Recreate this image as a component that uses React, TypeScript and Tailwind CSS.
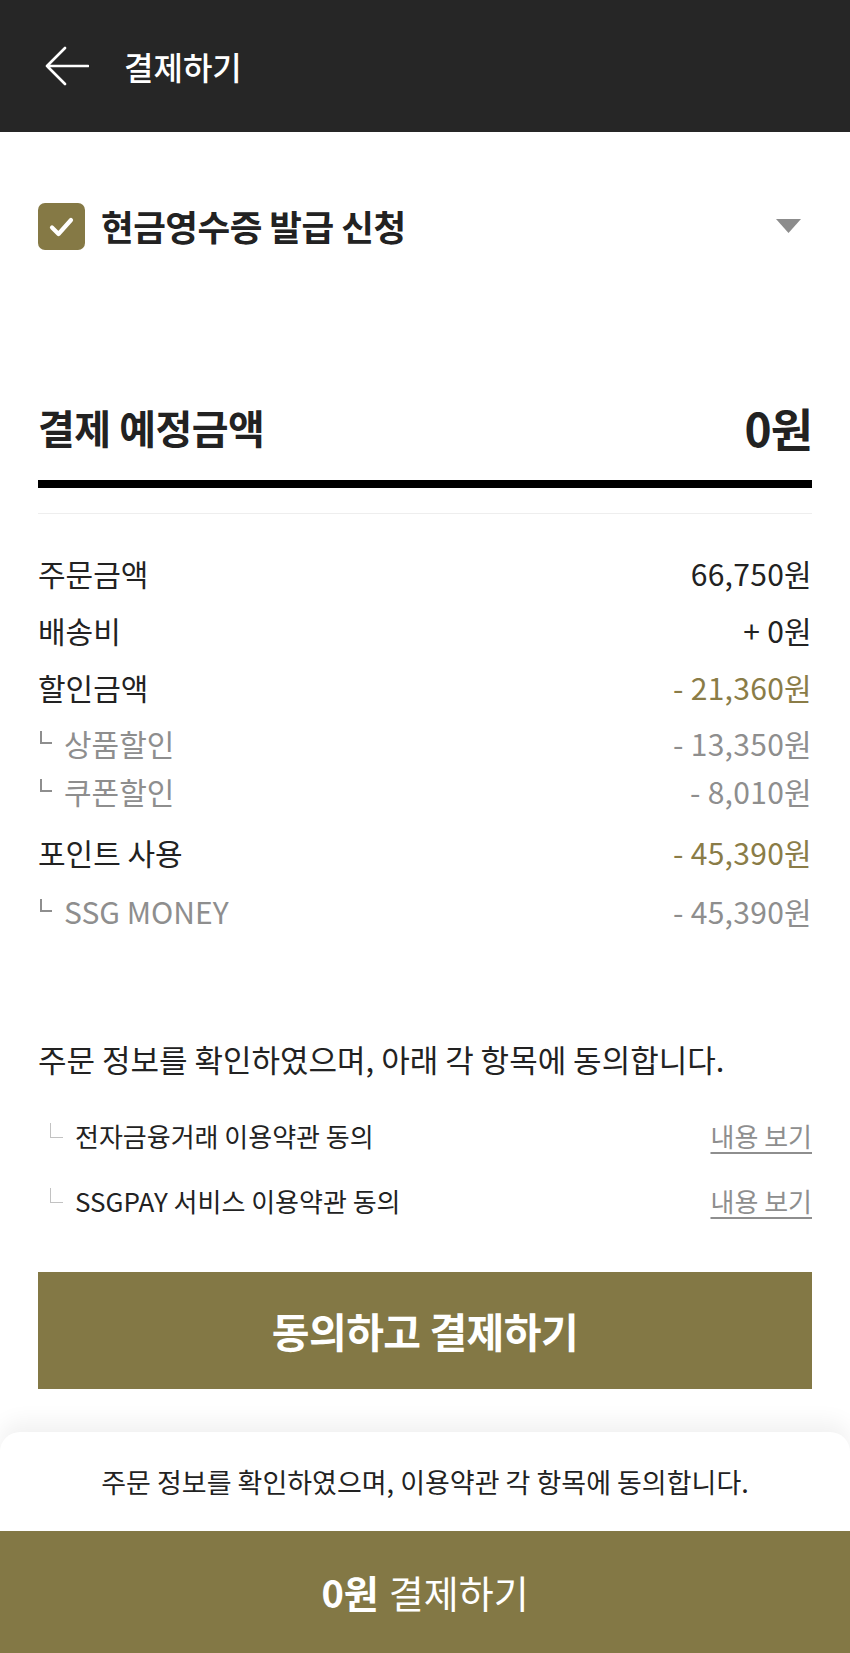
import React from "react";

const font = { fontFamily: '"Noto Sans CJK KR", "Noto Sans", sans-serif' };

function SubMark() {
  return <span className="inline-block w-[12px] h-[13px] border-l-[2px] border-b-[2px] border-[#8e8e8e] mb-[12px] mr-[12px] ml-[2px]" />;
}

function AgreeMark() {
  return <span className="inline-block w-[13px] h-[15px] border-l-[1.5px] border-b-[1.5px] border-[#c2c2c2] mb-[12px] mr-[12px] ml-[12px]" />;
}

type Row = { label: string; value: string; kind: "main" | "olive" | "sub"; mt: string };

const rows: Row[] = [
  { label: "주문금액", value: "66,750원", kind: "main", mt: "mt-[39px]" },
  { label: "배송비", value: "+ 0원", kind: "main", mt: "mt-[17px]" },
  { label: "할인금액", value: "- 21,360원", kind: "olive", mt: "mt-[17px]" },
  { label: "상품할인", value: "- 13,350원", kind: "sub", mt: "mt-[16px]" },
  { label: "쿠폰할인", value: "- 8,010원", kind: "sub", mt: "mt-[8px]" },
  { label: "포인트 사용", value: "- 45,390원", kind: "olive", mt: "mt-[21px]" },
  { label: "SSG MONEY", value: "- 45,390원", kind: "sub", mt: "mt-[19px]" },
];

export default function App() {
  return (
    <div className="w-[850px] h-[1653px] bg-white flex flex-col overflow-hidden" style={font}>
      <header className="h-[132px] shrink-0 bg-[#262626] flex items-center pl-[44px]">
        <svg width="45" height="40" viewBox="0 0 45 40" fill="none">
          <path d="M44 20H3M21 2L3 20L21 38" stroke="white" strokeWidth="2.6" strokeLinecap="round" strokeLinejoin="round" />
        </svg>
        <span className="ml-[35px] text-[32px] text-white font-medium leading-none">결제하기</span>
      </header>

      <main className="flex-1 px-[38px] flex flex-col">
        <div className="mt-[70px] h-[48px] flex items-center justify-between">
          <div className="flex items-center">
            <span className="w-[47px] h-[47px] rounded-[7px] bg-[#857945] flex items-center justify-center">
              <svg width="47" height="47" viewBox="0 0 47 47" fill="none">
                <path d="M14 24.5L20.5 31L33 17" stroke="white" strokeWidth="4.2" strokeLinecap="round" strokeLinejoin="round" />
              </svg>
            </span>
            <span className="ml-[16px] text-[35.5px] font-bold text-[#222] leading-none tracking-[-0.5px]">현금영수증 발급 신청</span>
          </div>
          <svg width="25" height="14" viewBox="0 0 25 14" className="mr-[11px]">
            <path d="M0 0H25L12.5 14Z" fill="#8c8c8c" />
          </svg>
        </div>

        <div className="mt-[147px] h-[60px] flex items-center justify-between">
          <span className="text-[40px] font-bold text-[#222] leading-none tracking-[-0.5px]">결제 예정금액</span>
          <span className="text-[46px] font-bold text-[#222] leading-none tracking-[-1px]">0원</span>
        </div>
        <div className="mt-[23px] h-[8px] bg-black" />
        <div className="mt-[25px] h-px bg-[#eeeeee]" />

        {rows.map((r, i) => (
          <div key={i} className={`${r.mt} h-[40px] flex items-center justify-between`}>
            <span className={`flex items-center text-[30px] leading-none ${r.kind === "sub" ? "text-[#8e8e8e]" : "text-[#222]"}`}>
              {r.kind === "sub" && <SubMark />}
              {r.label}
            </span>
            <span
              className={`text-[30px] leading-none tracking-[0.3px] ${
                r.kind === "olive" ? "text-[#8a7c47]" : r.kind === "sub" ? "text-[#8e8e8e]" : "text-[#222]"
              }`}
            >
              {r.value}
            </span>
          </div>
        ))}

        <div className="mt-[107px] h-[40px] flex items-center text-[31px] text-[#222] leading-none">
          주문 정보를 확인하였으며, 아래 각 항목에 동의합니다.
        </div>
        <div className="mt-[40px] h-[36px] flex items-center justify-between">
          <span className="flex items-center text-[26px] text-[#222] leading-none">
            <AgreeMark />
            전자금융거래 이용약관 동의
          </span>
          <span className="text-[26px] text-[#8e8e8e] leading-none underline underline-offset-[5px] decoration-[1.5px]">내용 보기</span>
        </div>
        <div className="mt-[29px] h-[36px] flex items-center justify-between">
          <span className="flex items-center text-[26px] text-[#222] leading-none">
            <AgreeMark />
            SSGPAY 서비스 이용약관 동의
          </span>
          <span className="text-[26px] text-[#8e8e8e] leading-none underline underline-offset-[5px] decoration-[1.5px]">내용 보기</span>
        </div>

        <button className="mt-[53px] h-[117px] bg-[#837845] flex items-center justify-center text-white text-[41px] font-bold leading-none tracking-[-0.5px]">
          동의하고 결제하기
        </button>
      </main>

      <footer className="shrink-0 rounded-t-[20px] bg-white shadow-[0_-10px_22px_rgba(0,0,0,0.06)] overflow-hidden">
        <div className="h-[99px] flex items-center justify-center text-[27px] text-[#222] leading-none">
          주문 정보를 확인하였으며, 이용약관 각 항목에 동의합니다.
        </div>
        <div className="h-[122px] bg-[#837845] flex items-center justify-center text-white text-[38px] leading-none">
          <span className="font-bold">0원</span>
          <span className="ml-[10px] font-normal">결제하기</span>
        </div>
      </footer>
    </div>
  );
}
